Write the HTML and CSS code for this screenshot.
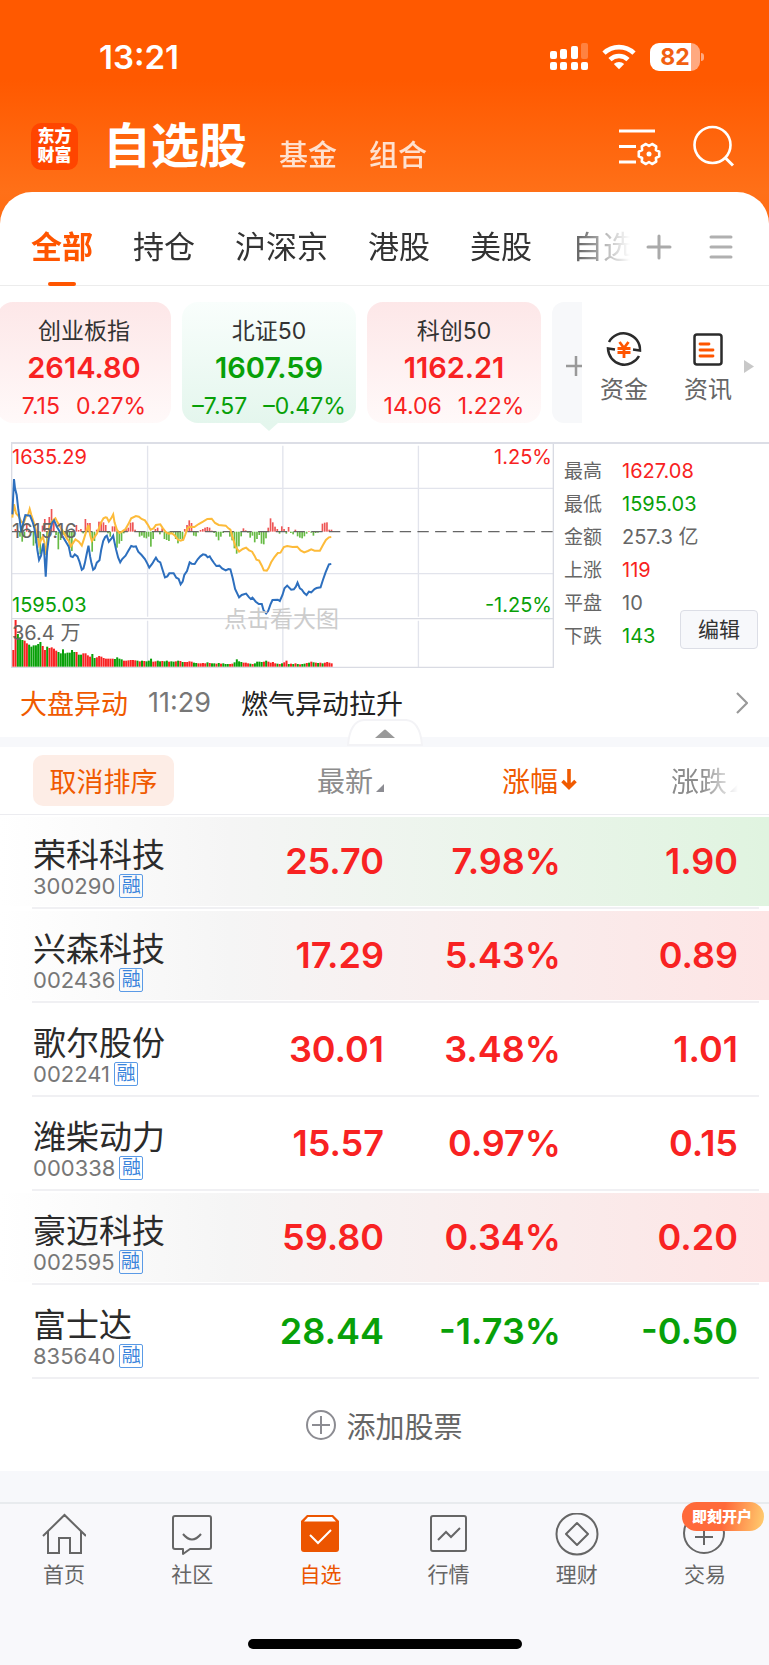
FILE: index.html
```html
<!DOCTYPE html>
<html lang="zh-CN">
  <head>
    <meta charset="UTF-8" />
    <meta name="viewport" content="width=device-width, initial-scale=1.0" />
    <title>自选股</title>
    <link rel="stylesheet" href="styles.css">
  </head>

  <body>
    <div class="app">
      <div class="status">
        <span class="time">13:21</span>
        <div class="status-icons">
          <svg width="38" height="28" viewBox="0 0 38 28" fill="#fff">
            <rect x="0" y="8" width="7" height="8" rx="2" />
            <rect x="10" y="6" width="7" height="10" rx="2" />
            <rect x="21" y="3" width="7" height="13" rx="2" />
            <rect x="31" y="0" width="7" height="16" rx="2" opacity="0.25" />
            <rect x="0" y="19" width="7" height="8" rx="2" />
            <rect x="10" y="19" width="7" height="8" rx="2" />
            <rect x="21" y="19" width="7" height="8" rx="2" />
            <rect x="31" y="19" width="7" height="8" rx="2" />
          </svg>
          <svg class="wifi" width="34" height="26" viewBox="0 0 34 26" fill="none" stroke="#fff" stroke-width="4.6">
            <path d="M2 9.2a21.5 21.5 0 0 1 30 0" />
            <path d="M8 15.6a13 13 0 0 1 18 0" />
            <path d="M11.8 20a7.6 7.6 0 0 1 10.4 0L17 25.2z" fill="#fff" stroke="none" />
          </svg>
          <div class="battery"><span>82</span></div>
        </div>
      </div>

      <header class="topbar">
        <div class="logo">东方<br />财富</div>
        <nav class="sections">
          <h1>自选股</h1>
          <a href="#">基金</a>
          <a href="#">组合</a>
        </nav>
        <button class="icon-btn" aria-label="设置">
          <svg width="42" height="42" viewBox="0 0 42 42" fill="none" stroke="#fff" stroke-width="3">
            <path d="M0 6h36M0 21.5h17M0 37h17" />
            <path d="M40.2 26.6V31.4L36.9 33 37.2 36.7 33.1 39 30 37 26.9 39 22.800 36.7 23.100 33 19.800 31.4V26.6L23.100 25 22.800 21.300 26.900 19 30 21 33.100 19 37.200 21.300 36.900 25z" stroke-width="2.6" stroke-linejoin="round" />
            <circle cx="30" cy="29" r="2.5" fill="#fff" stroke="none" />
          </svg>
        </button>
        <button class="icon-btn" aria-label="搜索">
          <svg width="42" height="42" viewBox="0 0 42 42" fill="none" stroke="#fff" stroke-width="2.6">
            <circle cx="19.5" cy="20" r="18" />
            <path d="M31.5 32l8.500 8.500" stroke-width="3" />
          </svg>
        </button>
      </header>

      <main class="panel">
        <div class="tabs">
          <div class="tab-strip">
            <button class="tab active">全部</button>
            <button class="tab">持仓</button>
            <button class="tab">沪深京</button>
            <button class="tab">港股</button>
            <button class="tab">美股</button>
            <button class="tab">自选</button>
          </div>
          <button class="icon-btn" aria-label="添加分组">
            <svg width="26" height="26" viewBox="0 0 26 26" stroke="#aaa" stroke-width="3" stroke-linecap="round">
              <path d="M13 2v22M2 13h22" />
            </svg>
          </button>
          <button class="icon-btn" aria-label="分组列表">
            <svg width="24" height="26" viewBox="0 0 24 26" stroke="#b0b0b0" stroke-width="3" stroke-linecap="round">
              <path d="M2 3h20M2 13h20M2 23h20" />
            </svg>
          </button>
        </div>

        <div class="indices">
          <div class="cards">
            <button class="card up">
              <span class="card-name">创业板指</span>
              <strong>2614.80</strong>
              <span class="change"><span>7.15</span><span>0.27%</span></span>
            </button>
            <button class="card down selected">
              <span class="card-name">北证50</span>
              <strong>1607.59</strong>
              <span class="change"><span>–7.57</span><span>–0.47%</span></span>
            </button>
            <button class="card up">
              <span class="card-name">科创50</span>
              <strong>1162.21</strong>
              <span class="change"><span>14.06</span><span>1.22%</span></span>
            </button>
            <button class="card-add" aria-label="添加指数">
              <svg width="20" height="20" viewBox="0 0 20 20" stroke="#999" stroke-width="2.5">
                <path d="M10 0v20M0 10h20" />
              </svg>
            </button>
          </div>
          <button class="quick">
            <svg width="36" height="36" viewBox="0 0 36 36" fill="none" stroke="#2b2b2b" stroke-width="2.5">
              <path d="M3 11A16.500 16.500 0 0 1 34 19.500L27 18.500" />
              <path d="M33 25A16.500 16.500 0 0 1 2 17.500L9 18.500" />
              <path d="M13.500 11l4.500 6 4.500-6M11.500 17.500h13M11.500 21.500h13M18 17v10" stroke="#ff5500" stroke-width="2.8" />
            </svg>
            资金
          </button>
          <button class="quick">
            <svg width="36" height="36" viewBox="0 0 36 36" fill="none" stroke="#2b2b2b" stroke-width="2.5">
              <rect x="4.500" y="3.500" width="27" height="30" rx="2.5" />
              <path d="M10 13h9M10 19h13M10 25h13" stroke="#ff5500" stroke-width="2.8" stroke-linecap="round" />
            </svg>
            资讯
          </button>
          <svg class="more" width="10" height="13" viewBox="0 0 10 13"><path d="M0 0l10 6.500L0 13z" fill="#c8c8c8" /></svg>
        </div>

        <div class="market">
          <div class="chart">
            <svg id="chart" viewBox="33 27 1626 672" preserveAspectRatio="none">
              <g stroke="#e2e4ec" stroke-width="4" fill="none">
                <path d="M33 160H1659M33 416H1659M442 32V545M847 32V545M1253 32V545M442 557V696M847 557V696M1253 557V696" />
                <path d="M33 551H1659M35 27V699M1657 27V699M33 697H1659" stroke="#d9dbe3" />
              </g>
              <g id="bars"></g>
              <path d="M36 290H1659" stroke="#666" stroke-width="4" stroke-dasharray="34 19" stroke-dashoffset="5" />
              <polyline fill="none" stroke="#fdbb3a" stroke-width="6" points="37,248 42,208 48,235 56,244 65,262 72,262 78,244 84,240 89,222 94,240 100,258 106,280 112,300 117,330 123,315 128,305 133,322 137,360 142,320 148,275 153,262 159,255 166,250 172,262 180,275 190,292 200,310 206,318 212,334 218,325 226,313 236,320 245,332 252,310 258,290 265,270 270,300 275,318 282,308 290,296 296,280 303,262 310,250 316,247 320,248 326,260 333,250 339,238 343,262 350,284 358,294 365,290 376,282 384,268 393,250 407,243 416,245 424,252 434,256 442,268 451,284 460,280 467,270 480,268 488,280 497,292 505,296 515,295 524,302 533,314 541,317 549,314 555,298 561,280 568,275 582,276 595,267 608,260 621,252 634,251 644,264 655,270 676,272 684,280 690,284 697,308 706,336 716,350 727,342 737,338 746,346 755,350 762,362 768,374 776,377 784,392 790,406 799,407 804,400 812,382 822,366 832,354 840,353 850,336 860,333 876,336 890,335 900,346 911,352 922,348 932,343 942,347 958,347 966,332 976,315 985,307 992,306" />
              <polyline fill="none" stroke="#2d6fbe" stroke-width="6" points="37,238 42,132 45,160 50,180 55,225 60,262 64,292 70,262 76,240 90,242 98,262 103,280 108,310 112,345 117,375 123,362 127,340 130,325 133,360 137,425 141,350 146,310 150,285 157,262 162,256 170,275 180,292 190,308 200,325 206,335 212,364 218,366 224,358 232,364 238,380 245,404 250,400 254,385 259,360 265,332 270,365 274,385 279,404 284,400 290,383 298,376 303,345 309,318 315,306 320,302 326,320 333,312 339,302 343,322 348,345 354,368 360,382 366,372 376,362 384,348 393,333 400,335 407,334 414,350 424,360 434,372 441,385 447,398 456,386 462,376 467,368 473,378 480,382 487,405 494,427 501,424 507,415 520,415 528,428 535,432 541,448 547,440 552,420 560,408 568,382 574,386 583,387 592,373 600,364 608,358 616,360 622,367 628,364 634,374 641,384 648,393 657,392 665,400 676,406 684,402 690,403 697,430 704,462 716,487 724,480 737,476 746,487 751,492 756,488 766,500 775,507 784,507 789,525 797,535 803,528 810,508 816,495 832,494 838,498 846,480 852,460 860,452 872,464 880,463 886,455 891,443 898,460 904,464 911,474 918,480 925,470 932,472 942,462 948,459 960,457 967,435 975,412 985,388 992,387" />
            </svg>
            <span class="label high red">1635.29</span>
            <span class="label high right red">1.25%</span>
            <span class="label middle">1615.16</span>
            <span class="label low green">1595.03</span>
            <span class="label low right green">-1.25%</span>
            <span class="label volume">36.4 万</span>
            <span class="hint">点击看大图</span>
          </div>
          <div class="stats">
            <dl>
              <dt>最高</dt><dd class="red">1627.08</dd>
              <dt>最低</dt><dd class="green">1595.03</dd>
              <dt>金额</dt><dd>257.3 亿</dd>
              <dt>上涨</dt><dd class="red">119</dd>
              <dt>平盘</dt><dd>10</dd>
              <dt>下跌</dt><dd class="green">143</dd>
            </dl>
            <button class="edit">编辑</button>
          </div>
        </div>

        <a class="news" href="#">
          <span class="news-tag">大盘异动</span>
          <time>11:29</time>
          <span class="news-title">燃气异动拉升</span>
          <svg width="12" height="22" viewBox="0 0 12 22" fill="none" stroke="#999" stroke-width="2.2"><path d="M1 1l10 10L1 21" /></svg>
        </a>

        <div class="divider">
          <button class="collapse" aria-label="收起">
            <svg width="76" height="27" viewBox="0 0 76 27">
              <path d="M1 26Q3 2 17 1H59Q73 2 75 26z" fill="#fff" stroke="#f3f3f6" stroke-width="2" />
              <path d="M28 19l9-8q1-1 2 0l9 8z" fill="#999" />
            </svg>
          </button>
        </div>

        <table class="stocks">
          <thead>
            <tr>
              <th class="name"><button class="reset">取消排序</button></th>
              <th><button class="sort">最新<i></i></button></th>
              <th>
                <button class="sort sorted">涨幅<svg width="16" height="22" viewBox="0 0 16 22" fill="none" stroke="#f05a00" stroke-width="3.6"><path d="M8 0v18M1.500 12L8 18.500 14.500 12" /></svg></button>
              </th>
              <th><button class="sort faded">涨跌<i></i></button></th>
            </tr>
          </thead>
          <tbody>
            <tr class="flash-green red">
              <td class="name">荣科科技<small>300290 <b>融</b></small></td>
              <td>25.70</td><td>7.98%</td><td>1.90</td>
            </tr>
            <tr class="flash-red red">
              <td class="name">兴森科技<small>002436 <b>融</b></small></td>
              <td>17.29</td><td>5.43%</td><td>0.89</td>
            </tr>
            <tr class="red">
              <td class="name">歌尔股份<small>002241 <b>融</b></small></td>
              <td>30.01</td><td>3.48%</td><td>1.01</td>
            </tr>
            <tr class="red">
              <td class="name">潍柴动力<small>000338 <b>融</b></small></td>
              <td>15.57</td><td>0.97%</td><td>0.15</td>
            </tr>
            <tr class="flash-red red">
              <td class="name">豪迈科技<small>002595 <b>融</b></small></td>
              <td>59.80</td><td>0.34%</td><td>0.20</td>
            </tr>
            <tr class="green">
              <td class="name">富士达<small>835640 <b>融</b></small></td>
              <td>28.44</td><td>-1.73%</td><td>-0.50</td>
            </tr>
          </tbody>
        </table>

        <button class="add-stock">
          <svg width="30" height="30" viewBox="0 0 30 30" fill="none" stroke="#8c8c92" stroke-width="2">
            <circle cx="15" cy="15" r="14" />
            <path d="M15 6v18M6 15h18" />
          </svg>
          添加股票
        </button>
      </main>

      <nav class="bottom-nav">
        <a href="#">
          <svg width="44" height="44" viewBox="0 0 44 44" fill="none" stroke="#666" stroke-width="2">
            <path d="M1 23L22.500 2 44 23M6 18v22h11V25h11v15h11V18" />
          </svg>
          首页
        </a>
        <a href="#">
          <svg width="44" height="44" viewBox="0 0 44 44" fill="none" stroke="#666" stroke-width="2">
            <path d="M5 3h34q2 0 2 2v29q0 2-2 2H20l-7 5v-5H5q-2 0-2-2V5q0-2 2-2zM13 21q9 11 18 0" stroke-linejoin="round" />
          </svg>
          社区
        </a>
        <a class="current" href="#">
          <svg width="44" height="44" viewBox="0 0 44 44">
            <path d="M9 2h26l6 6v28q0 3-3 3H6q-3 0-3-3V8z" fill="#ec5500" />
            <path d="M10 4h24l4 4.500H6z" fill="#fff" />
            <path d="M12 22l8 8 13-13" fill="none" stroke="#fff" stroke-width="2" />
          </svg>
          自选
        </a>
        <a href="#">
          <svg width="44" height="44" viewBox="0 0 44 44" fill="none" stroke="#666" stroke-width="2">
            <rect x="4" y="3" width="35" height="35" rx="2" />
            <path d="M11 27l8-8 5 5 9-9" />
          </svg>
          行情
        </a>
        <a href="#">
          <svg width="44" height="44" viewBox="0 0 44 44" fill="none" stroke="#666" stroke-width="2" stroke-linejoin="round">
            <circle cx="22" cy="21" r="20.500" />
            <path d="M22 10l11 11-11 11-11-11z" />
          </svg>
          理财
        </a>
        <a href="#">
          <svg width="44" height="44" viewBox="0 0 44 44" fill="none" stroke="#666" stroke-width="2">
            <circle cx="21" cy="20" r="20" />
            <path d="M21 14v18M12 24h18" />
          </svg>
          交易
          <span class="promo">即刻开户</span>
        </a>
        <div class="home-bar"></div>
      </nav>
    </div>
    <script src="chart.js"></script>
  </body>
</html>
```

FILE: styles.css
```css
* {
  box-sizing: border-box;
}

body {
  margin: 0;
  background: #f8f8fb;
  font-family: Inter, "Noto Sans CJK SC", sans-serif;
  color: #333;
}

button {
  padding: 0;
  border: none;
  background: none;
  font: inherit;
  color: inherit;
  cursor: pointer;
}

a {
  color: inherit;
  text-decoration: none;
}

svg {
  display: block;
  flex: none;
}

.app {
  background: linear-gradient(#ff5900 80px, #ff7018 192px, #ff6a10 240px);
}

.red {
  color: #f82222;
}

.green {
  color: #08a008;
}

/* status bar */
.status {
  display: flex;
  justify-content: space-between;
  align-items: center;
  height: 114px;
  padding: 0 69px 0 99px;
  color: #fff;
}

.time {
  font-size: 33px;
  font-weight: 600;
}

.status-icons {
  display: flex;
  align-items: center;
}

.wifi {
  margin: 0 14px;
}

.battery {
  position: relative;
  width: 50px;
  height: 28px;
  border-radius: 9px;
  background: linear-gradient(90deg, #fff 82%, #ffa980 82%);
  color: #f26010;
  font-size: 23px;
  font-weight: 700;
  line-height: 28px;
  text-align: center;
}

.battery::after {
  content: "";
  position: absolute;
  top: 10px;
  right: -4px;
  width: 3px;
  height: 8px;
  border-radius: 0 3px 3px 0;
  background: #ffa980;
}

/* header */
.topbar {
  display: flex;
  align-items: center;
  gap: 32px;
  height: 78px;
  padding: 0 34px 14px 31px;
  color: #fff;
}

.logo {
  width: 47px;
  height: 47px;
  padding-top: 4px;
  border-radius: 10px;
  background: #ff4500;
  font-size: 17px;
  font-weight: 900;
  line-height: 19px;
  text-align: center;
}

.sections {
  display: flex;
  flex: 1;
  align-items: flex-end;
  margin-left: -7px;
}

.sections h1 {
  margin: 0;
  font-size: 48px;
  font-weight: 700;
  line-height: 64px;
}

.sections a {
  margin-left: 32px;
  font-size: 29px;
  font-weight: 500;
  line-height: 44px;
  opacity: 0.8;
}

/* white panel */
.panel {
  border-radius: 32px 32px 0 0;
  background: #fff;
}

.tabs {
  display: flex;
  align-items: center;
  height: 94px;
  padding: 16px 36px 0 31px;
  border-bottom: 1px solid #ececec;
}

.tab-strip {
  display: flex;
  flex: 1;
  gap: 40px;
  overflow: hidden;
  mask-image: linear-gradient(90deg, #000 calc(100% - 70px), transparent);
}

.tab-strip + .icon-btn {
  margin: 0 37px 0 16px;
}

.tab {
  position: relative;
  flex: none;
  height: 78px;
  padding-bottom: 4px;
  font-size: 31px;
}

.tab.active {
  color: #ff5500;
  font-weight: 700;
}

.tab.active::after {
  content: "";
  position: absolute;
  left: 50%;
  bottom: 0;
  width: 28px;
  height: 4px;
  margin-left: -14px;
  border-radius: 2px;
  background: #ff5500;
}

/* index cards */
.indices {
  display: flex;
  height: 156px;
}

.cards {
  display: flex;
  flex: 1;
  gap: 11px;
  margin-left: -3px;
  padding: 16px 0 19px;
  overflow: hidden;
}

.card {
  position: relative;
  display: flex;
  flex: none;
  flex-direction: column;
  align-items: center;
  width: 174px;
  padding-top: 13px;
  border-radius: 16px;
}

.card.up {
  background: linear-gradient(#fde7e8, #fff9f9);
  color: #f82222;
}

.card.down {
  background: linear-gradient(#f9fefc, #e4f6ed);
  color: #08a008;
}

.card.selected::after {
  content: "";
  position: absolute;
  top: 100%;
  left: 50%;
  margin-left: -9px;
  border: 9px solid transparent;
  border-top: 8px solid #e4f6ed;
}

.card-name {
  color: #333;
  font-size: 23px;
  line-height: 32px;
}

.card strong {
  font-size: 29px;
  font-weight: 600;
  line-height: 42px;
}

.change {
  display: flex;
  gap: 16px;
  font-size: 23px;
  line-height: 34px;
}

.card-add {
  display: flex;
  flex: none;
  align-items: center;
  justify-content: center;
  width: 48px;
  padding-top: 6px;
  border-radius: 12px;
  background: #f7f8fa;
}

.quick {
  display: flex;
  flex-direction: column;
  align-items: center;
  gap: 6px;
  width: 84px;
  padding-top: 45px;
  color: #666;
  font-size: 24px;
  line-height: 34px;
}

.more {
  margin: 74px 15px 0 -6px;
}

/* chart and figures */
.market {
  display: flex;
  margin-left: 11px;
  border-top: 2px solid #dcdee6;
}

.chart {
  position: relative;
  flex: 1;
}

.chart > svg {
  width: 100%;
  height: 224px;
}

.label {
  position: absolute;
  left: 1px;
  color: #666;
  font-size: 20px;
  line-height: 28px;
}

.label.red {
  color: #f82222;
}

.label.green {
  color: #08a008;
}

.label.right {
  right: 2px;
  left: auto;
}

.label.high {
  top: -1px;
}

.label.middle {
  top: 73px;
}

.label.low {
  top: 147px;
}

.label.volume {
  top: 175px;
}

.hint {
  position: absolute;
  top: 158px;
  left: 213px;
  color: #ccc;
  font-size: 23px;
  line-height: 34px;
}

.stats {
  position: relative;
  width: 215px;
  padding: 11px 10px;
  color: #666;
}

.stats dl {
  display: grid;
  grid-template-columns: 58px 1fr;
  margin: 0;
  font-size: 19px;
  line-height: 33px;
}

.stats dd {
  margin: 0;
  font-size: 20px;
}

.stats .red {
  color: #f82222;
}

.stats .green {
  color: #08a008;
}

.edit {
  position: absolute;
  right: 11px;
  bottom: 19px;
  width: 78px;
  height: 39px;
  padding-bottom: 3px;
  border: 1px solid #dcdee6;
  border-radius: 4px;
  background: #f7f8fb;
  color: #333;
  font-size: 21px;
}

.news {
  display: flex;
  align-items: center;
  height: 69px;
  padding: 0 21px 0 20px;
  font-size: 27px;
}

.news-tag {
  color: #f05a00;
}

.news time {
  margin: 0 30px 0 20px;
  color: #777;
}

.news-title {
  flex: 1;
  color: #222;
}

.divider {
  position: relative;
  height: 10px;
  background: #f7f8fb;
}

.collapse {
  position: absolute;
  left: 50%;
  bottom: 1px;
  margin-left: -38px;
}

/* stock list */
.stocks {
  width: 100%;
  table-layout: fixed;
  border-collapse: collapse;
}

.stocks th,
.stocks td {
  width: 177px;
  height: 94px;
  padding: 0 31px 2px 0;
  text-align: right;
}

.stocks td {
  font-size: 36px;
  font-weight: 600;
}

.stocks th {
  height: 68px;
  color: #8c8c8c;
  font-size: 28px;
  font-weight: 400;
}

.stocks thead tr {
  background: linear-gradient(#ececf0, #ececf0) 0 100% / 100% 1px no-repeat;
}

.stocks tbody tr {
  --flash: #fff;
  background:
    linear-gradient(#f0f0f3, #f0f0f3) 32px 100% / calc(100% - 42px) 2px no-repeat,
    linear-gradient(90deg, #fff, #f5f5f5 30%, var(--flash)) 0 2px / 100% 89px no-repeat;
}

.stocks tbody tr:not([class*="flash"]) {
  background: linear-gradient(#f0f0f3, #f0f0f3) 32px 100% / calc(100% - 42px) 2px no-repeat;
}

.stocks tbody .flash-green {
  --flash: #e0f4e0;
}

.stocks tbody .flash-red {
  --flash: #fde5e5;
}

.stocks .name {
  width: auto;
  padding-left: 33px;
  text-align: left;
}

.stocks td.name {
  padding-top: 12px;
  padding-right: 0;
  color: #2b2b2b;
  font-size: 33px;
  font-weight: 400;
  line-height: 38px;
}

.stocks small {
  display: flex;
  align-items: center;
  gap: 4px;
  color: #777;
  font-size: 22px;
  line-height: 24px;
}

.stocks small b {
  width: 24px;
  height: 24px;
  border: 1px solid #5a9ae6;
  border-radius: 2px;
  color: #3a84dc;
  font-size: 19px;
  font-weight: 400;
  line-height: 21px;
  text-align: center;
}

.reset {
  width: 141px;
  height: 51px;
  border-radius: 10px;
  background: #fdede6;
  color: #f05a00;
  font-size: 27px;
}

.sort {
  display: inline-flex;
  align-items: center;
  gap: 3px;
}

.sort i {
  align-self: flex-end;
  margin: 0 0 8px;
  border: 4px solid transparent;
  border-right-color: #8c8c92;
  border-bottom-color: #8c8c92;
}

.sort.sorted {
  margin-right: -16px;
  color: #f05a00;
}

.sort.faded {
  mask-image: linear-gradient(90deg, #000 45%, transparent);
}

.add-stock {
  display: flex;
  align-items: center;
  justify-content: center;
  gap: 10px;
  width: 100%;
  height: 92px;
  color: #666;
  font-size: 29px;
}

/* bottom navigation */
.bottom-nav {
  position: relative;
  display: flex;
  height: 194px;
  background: linear-gradient(#f7f8fb 31px, #e8ebee 31px, #e8ebee 33px, #f8f8fb 33px);
}

.bottom-nav a {
  position: relative;
  display: flex;
  flex: 1;
  flex-direction: column;
  align-items: center;
  gap: 3px;
  padding-top: 42px;
  color: #666;
  font-size: 21px;
  line-height: 30px;
}

.bottom-nav .current {
  color: #ec5500;
}

.promo {
  position: absolute;
  top: 31px;
  right: 5px;
  width: 82px;
  height: 29px;
  padding-left: 10px;
  border-radius: 15px;
  background: linear-gradient(100deg, #ff6a3a 50%, #ffcf70);
  color: #fff;
  font-size: 15px;
  font-weight: 900;
  line-height: 29px;
  white-space: nowrap;
}

.home-bar {
  position: absolute;
  bottom: 16px;
  left: 50%;
  width: 274px;
  height: 10px;
  border-radius: 5px;
  background: #000;
  transform: translateX(-50%);
}
```

FILE: chart.js
```js
// one value per minute: above zero is drawn red, below zero green
const momentum = [
  0, 8, 4, -15, -30, -14, 24, 2, -4, -42, -35, -25, -68, 18, 38, -60, 44, 68, 36, -10,
  -53, -25, -10, -8, -18, -42, -58, -15, 20, 5, 8, -5, 38, 26, 26, -60, -28, 6, 30, 30,
  28, 20, -5, -15, 16, 16, -48, -36, -28, -5, 8, 12, 27, 28, 6, 2, -15, -12, -18, -20,
  -15, -45, -22, 8, 12, -8, 10, -22, -25, -28, -6, -3, -22, -35, -22, -28, 8, 20, 34, 26,
  -12, -14, -2, 5, 8, 12, 14, 12, 3, -4, -15, -26, -15, -4, 2, 2, -15, -26, -50, -66,
  -44, -14, 10, 4, -3, -18, -12, -32, -22, -10, -36, -38, -20, 12, 40, 28, 15, 8, -6, 16,
  8, -6, 14, -4, -8, 6, -14, -18, -20, -14, -6, 2, -3, -12, -4, -3, 2, 24, 27, 28, 6, 6,
];

const volume = [
  50, 140, -98, -88, -80, 78, 70, -66, -60, -64, -64, -68, -74, 62, 50, -60, 56, 58, 54, 48,
  -44, -40, -52, -40, -42, -42, -50, -44, 44, -36, -36, 40, 40, 34, 30, -38, -26, 28, 32, 30,
  26, 24, 24, 24, 24, -23, -28, -24, -22, 18, 18, 19, 20, 20, 19, -18, 16, -18, 17, -16,
  -18, -24, 15, 16, -18, -16, 17, -16, -18, 15, -16, -15, 16, -18, 17, -14, 14, 14, 16, 15,
  -12, -11, 10, 10, 11, 10, -13, 11, -10, -10, 9, -11, 9, -10, -8, -8, 8, 9, -13, -22,
  -16, -14, 12, 12, 10, -9, 8, -10, -15, -15, -14, 15, -18, 15, 12, 14, 10, -9, 8, -10,
  13, 18, -8, 9, -8, 10, -8, 7, -8, -9, 11, -12, 15, -13, 12, -11, 12, -10, 12, 14, 12, 10,
];

const bars = document.querySelector("#bars");

function drawBars(values, baseline, width, colors, hanging) {
  values.forEach((value, i) => {
    const size = Math.abs(value);
    const bar = document.createElementNS("http://www.w3.org/2000/svg", "rect");
    bar.setAttribute("x", 37 + i * 6.76);
    bar.setAttribute("y", hanging && value < 0 ? baseline : baseline - size);
    bar.setAttribute("width", width);
    bar.setAttribute("height", size);
    bar.setAttribute("fill", value < 0 ? colors.down : colors.up);
    bars.append(bar);
  });
}

drawBars(momentum, 290, 5, { up: "#ee5555", down: "#66bb44" }, true);
drawBars(volume, 695, 6, { up: "#f82222", down: "#08a008" }, false);
```
